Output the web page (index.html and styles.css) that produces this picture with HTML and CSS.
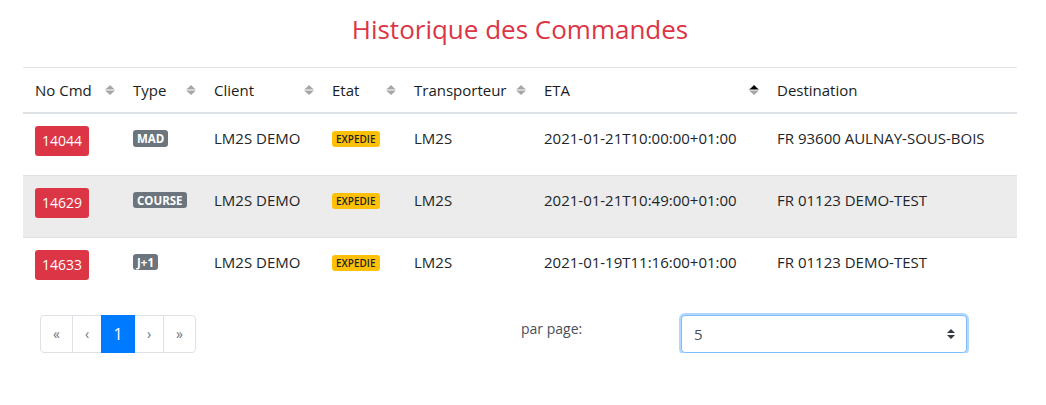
FILE: index.html
```html
<!DOCTYPE html>
<html lang="fr">
<head>
	<meta charset="UTF-8">
	<title>Historique des Commandes</title>
	<link rel="stylesheet" href="styles.css">
</head>
<body>
	<div class="page">
		<h3 class="title">Historique des Commandes</h3>

		<!-- tableau des commandes -->
		<table class="orders">
			<colgroup>
				<col style="width: 98px">
				<col style="width: 81px">
				<col style="width: 118px">
				<col style="width: 82px">
				<col style="width: 130px">
				<col style="width: 233px">
				<col style="width: 252px">
			</colgroup>
			<thead>
				<tr>
					<th><div class="th-in"><span>No Cmd</span><svg class="sort" viewBox="0 0 101 101"><path class="off" d="M51 1l25 23 24 22H1l25-22z"/><path class="off" d="M51 101l25-23 24-22H1l25 22z"/></svg></div></th>
					<th><div class="th-in"><span>Type</span><svg class="sort" viewBox="0 0 101 101"><path class="off" d="M51 1l25 23 24 22H1l25-22z"/><path class="off" d="M51 101l25-23 24-22H1l25 22z"/></svg></div></th>
					<th><div class="th-in"><span>Client</span><svg class="sort" viewBox="0 0 101 101"><path class="off" d="M51 1l25 23 24 22H1l25-22z"/><path class="off" d="M51 101l25-23 24-22H1l25 22z"/></svg></div></th>
					<th><div class="th-in"><span>Etat</span><svg class="sort" viewBox="0 0 101 101"><path class="off" d="M51 1l25 23 24 22H1l25-22z"/><path class="off" d="M51 101l25-23 24-22H1l25 22z"/></svg></div></th>
					<th><div class="th-in"><span>Transporteur</span><svg class="sort" viewBox="0 0 101 101"><path class="off" d="M51 1l25 23 24 22H1l25-22z"/><path class="off" d="M51 101l25-23 24-22H1l25 22z"/></svg></div></th>
					<th><div class="th-in"><span>ETA</span><svg class="sort" viewBox="0 0 101 101"><path d="M51 1l25 23 24 22H1l25-22z"/><path class="off" d="M51 101l25-23 24-22H1l25 22z"/></svg></div></th>
					<th><div class="th-in"><span>Destination</span></div></th>
				</tr>
			</thead>
			<tbody>
				<tr>
					<td><span class="btn-cmd">14044</span></td>
					<td><span class="badge badge-type">MAD</span></td>
					<td>LM2S DEMO</td>
					<td><span class="badge badge-etat">EXPEDIE</span></td>
					<td>LM2S</td>
					<td>2021-01-21T10:00:00+01:00</td>
					<td>FR 93600 AULNAY-SOUS-BOIS</td>
				</tr>
				<tr class="hover">
					<td><span class="btn-cmd">14629</span></td>
					<td><span class="badge badge-type">COURSE</span></td>
					<td>LM2S DEMO</td>
					<td><span class="badge badge-etat">EXPEDIE</span></td>
					<td>LM2S</td>
					<td>2021-01-21T10:49:00+01:00</td>
					<td>FR 01123 DEMO-TEST</td>
				</tr>
				<tr>
					<td><span class="btn-cmd">14633</span></td>
					<td><span class="badge badge-type">J+1</span></td>
					<td>LM2S DEMO</td>
					<td><span class="badge badge-etat">EXPEDIE</span></td>
					<td>LM2S</td>
					<td>2021-01-19T11:16:00+01:00</td>
					<td>FR 01123 DEMO-TEST</td>
				</tr>
			</tbody>
		</table>

		<!-- pagination + nombre par page -->
		<div class="bottom">
			<div class="half">
				<ul class="pagination">
					<li class="pg first">&laquo;</li>
					<li class="pg prev">&lsaquo;</li>
					<li class="pg active">1</li>
					<li class="pg next">&rsaquo;</li>
					<li class="pg last">&raquo;</li>
				</ul>
			</div>
			<div class="half per-page">
				<label class="pp-label" for="perPage">par page:</label>
				<div class="select-wrap">
					<select id="perPage" class="pp-select">
						<option>5</option>
						<option>10</option>
						<option>15</option>
					</select>
					<svg class="caret" viewBox="0 0 4 5"><path d="M2 0L0 2h4zm0 5L0 3h4z"/></svg>
				</div>
			</div>
		</div>
	</div>
</body>
</html>
```

FILE: styles.css
```css
*{
	box-sizing: border-box;
}
body{
	margin: 0;
	font-family: "Open Sans", "Noto Sans", sans-serif;
	font-size: 15px;
	line-height: 1.5;
	color: #212529;
	background: #fff;
}
.page{
	padding: 12px 29px 0 23px;
}
/*titre*/
.title{
	margin: 0 0 21px;
	text-align: center;
	font-size: 26px;
	font-weight: 500;
	line-height: 34px;
	color: #dc3545;
}
/*table*/
.orders{
	width: 994px;
	table-layout: fixed;
	border-collapse: collapse;
}
.orders th,
.orders td{
	text-align: left;
	vertical-align: top;
	white-space: nowrap;
	border-top: 1px solid #dee2e6;
}
.orders th{
	padding: 11px 6px 11px 12px;
	line-height: 22px;
	font-weight: 500;
	color: #1a1d20;
	border-bottom: 2px solid #dee2e6;
}
.th-in{
	display: flex;
	align-items: center;
	justify-content: space-between;
}
.sort{
	width: 10px;
	height: 16px;
	fill: #000;
}
.sort .off{
	opacity: .35;
}
.orders td{
	height: 62px;
	padding: 12px;
	line-height: 24px;
}
.orders tr.hover td{
	background: #ececec;
}
/*badges*/
.btn-cmd{
	display: inline-block;
	padding: 4px 7px;
	border-radius: 3px;
	background: #dc3545;
	color: #fff;
	font-size: 14px;
	line-height: 22px;
}
.badge{
	display: inline-block;
	border-radius: 3px;
	line-height: 1;
	vertical-align: 1px;
}
.badge-type{
	padding: 3px 4px 2px;
	background: #6c757d;
	color: #fff;
	font-size: 11.5px;
	font-weight: 700;
}
.badge-etat{
	padding: 3px 4px;
	background: #ffc107;
	color: #212529;
	font-size: 10px;
	font-weight: 600;
}
/*bas de page*/
.bottom{
	display: flex;
	margin-top: 16px;
	width: 994px;
}
.half{
	width: 50%;
	display: flex;
}
.pagination{
	display: flex;
	list-style: none;
	margin: 0 0 0 17px;
	padding: 0;
}
.pg{
	height: 38px;
	line-height: 36px;
	text-align: center;
	border: 1px solid #dee2e6;
	margin-left: -1px;
	color: #6c757d;
	font-size: 14px;
}
.first{
	width: 33px;
	margin-left: 0;
	border-radius: 4px 0 0 4px;
}
.prev,
.next{
	width: 30px;
}
.last{
	width: 33px;
	border-radius: 0 4px 4px 0;
}
.pg.active{
	width: 34px;
	background: #007bff;
	border-color: #007bff;
	color: #fff;
	font-size: 16px;
	position: relative;
	z-index: 1;
}
.per-page{
	align-items: flex-start;
}
.pp-label{
	width: 161px;
	padding: 3px 0 0 1px;
	color: #495057;
	font-size: 14px;
}
.select-wrap{
	position: relative;
	width: 286px;
}
.pp-select{
	width: 100%;
	height: 38px;
	padding: 6px 12px;
	font-family: inherit;
	font-size: 15px;
	color: #495057;
	background: #fff;
	border: 1px solid #80bdff;
	border-radius: 4px;
	box-shadow: 0 0 0 2px rgba(0,123,255,.3);
	-webkit-appearance: none;
	appearance: none;
	outline: none;
}
.caret{
	position: absolute;
	right: 12px;
	top: 14px;
	width: 8px;
	height: 10px;
	fill: #343a40;
}
```
